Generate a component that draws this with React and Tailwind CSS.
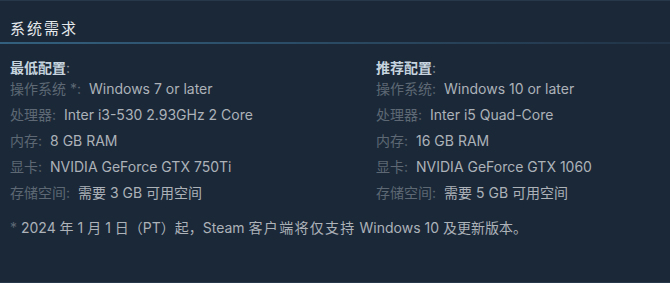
import React from "react";

const FONT = { fontFamily: 'Inter,"Noto Sans CJK SC",sans-serif' };

function Row({ label, value, last }) {
  return (
    <div className={`h-[20px] leading-[20px] whitespace-nowrap ${last ? "" : "mb-[6px]"}`}>
      <span className="text-[#5d6874]">{label}</span>
      <span className="ml-[8px] text-[#acb2b8]">{value}</span>
    </div>
  );
}

function Column({ title, rows }) {
  return (
    <div>
      <div className="h-[20px] leading-[20px] font-bold text-[#c6d4df] whitespace-nowrap">
        {title}
        <span className="font-normal text-[#8f98a0]">:</span>
      </div>
      <div className="mt-[1px]">
        {rows.map((r, i) => (
          <Row key={i} label={r[0]} value={r[1]} last={i === rows.length - 1} />
        ))}
      </div>
    </div>
  );
}

export default function App() {
  const min = [
    ["操作系统 *:", "Windows 7 or later"],
    ["处理器:", "Inter i3-530 2.93GHz 2 Core"],
    ["内存:", "8 GB RAM"],
    ["显卡:", "NVIDIA GeForce GTX 750Ti"],
    ["存储空间:", "需要 3 GB 可用空间"],
  ];
  const rec = [
    ["操作系统:", "Windows 10 or later"],
    ["处理器:", "Inter i5 Quad-Core"],
    ["内存:", "16 GB RAM"],
    ["显卡:", "NVIDIA GeForce GTX 1060"],
    ["存储空间:", "需要 5 GB 可用空间"],
  ];
  return (
    <div
      className="w-[670px] h-[283px] bg-[#1b2838] border-t border-b border-[#26384a] text-[14px] overflow-hidden"
      style={FONT}
    >
      <div className="px-[10px] pt-[18px]">
        <div className="h-[20px] leading-[20px] text-[15px] tracking-[2px] text-[#e5e9ec]">系统需求</div>
      </div>
      <div className="mt-[3px] h-[2px] bg-gradient-to-r from-[#33607e] via-[#2a4a63] to-[#223447]" />
      <div className="px-[10px] pt-[14px]">
        <div className="grid grid-cols-[366px_1fr]">
          <Column title="最低配置" rows={min} />
          <Column title="推荐配置" rows={rec} />
        </div>
        <div className="mt-[15px] h-[20px] leading-[20px] whitespace-nowrap text-[#acb2b8]">
          <span className="text-[#5d6874]">*</span> 2024 年 1 月 1 日（PT）起，Steam{" "}
          <span className="tracking-[1.3px]">客户端将仅支持</span> Windows 10 及更新版本。
        </div>
      </div>
    </div>
  );
}
